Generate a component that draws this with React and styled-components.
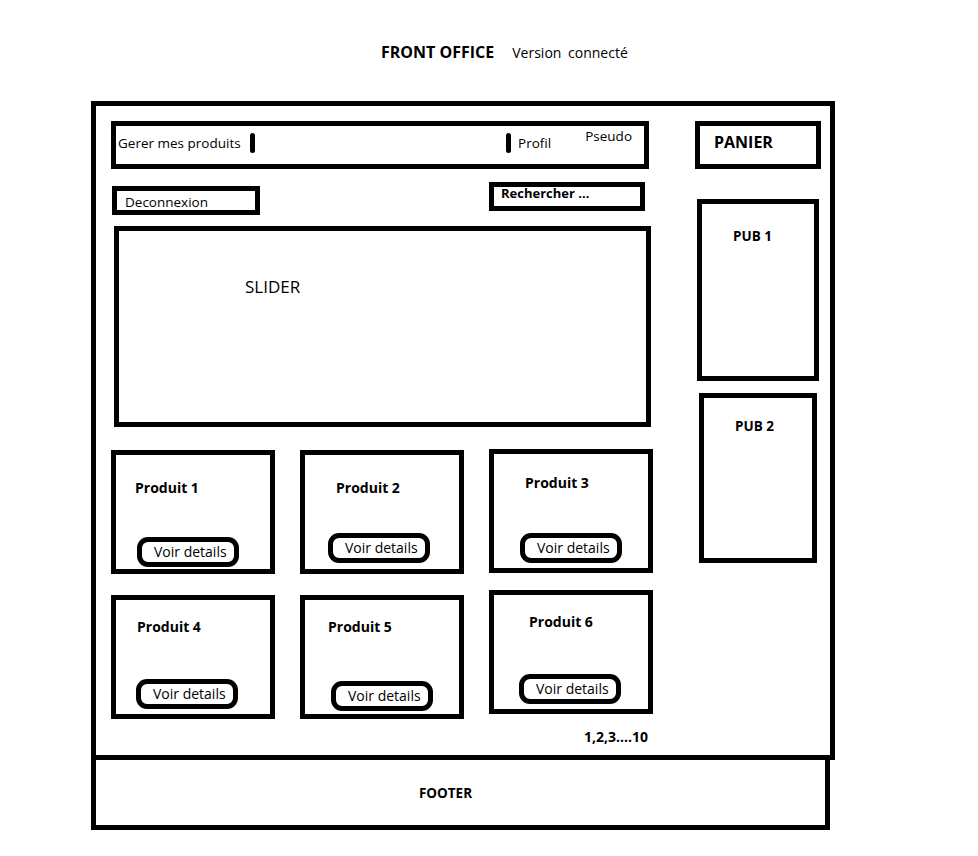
import React from "react";
import styled, { createGlobalStyle } from "styled-components";

const GlobalStyle = createGlobalStyle`
  body {
    margin: 0;
    background: #fff;
    font-family: "Open Sans", "Noto Sans", sans-serif;
    color: #000;
  }
`;

const Page = styled.div`
  width: 978px;
  height: 856px;
  padding-left: 91px;
  box-sizing: border-box;
`;

const TitleRow = styled.header`
  display: flex;
  align-items: baseline;
  gap: 18px;
  height: 101px;
  padding-left: 290px;
  padding-top: 41px;
  box-sizing: border-box;
`;

const Title = styled.h1`
  margin: 0;
  font-size: 16px;
  font-weight: 700;
`;

const Subtitle = styled.span`
  font-size: 14px;
  word-spacing: 3px;
`;

const Frame = styled.main`
  width: 744px;
  height: 659px;
  border: 5px solid #000;
  box-sizing: border-box;
  display: flex;
  padding: 15px 9px 0 15px;
`;

const LeftColumn = styled.div`
  width: 540px;
  display: flex;
  flex-direction: column;
`;

const RightColumn = styled.aside`
  margin-left: auto;
  width: 126px;
  display: flex;
  flex-direction: column;
  align-items: center;
`;

const Box = styled.div`
  border: 5px solid #000;
  box-sizing: border-box;
`;

const NavBar = styled(Box)`
  height: 48px;
  width: 538px;
  display: flex;
  align-items: center;
  padding: 0 12px 4px 2px;
  font-size: 13.5px;
`;

const Separator = styled.span`
  display: inline-block;
  width: 5px;
  height: 20px;
  border-radius: 3px;
  background: #000;
  margin: ${(p) => p.$margin || "0"};
`;

const RightNav = styled.div`
  margin-left: auto;
  display: flex;
  align-items: center;
  align-self: stretch;
`;

const Pseudo = styled.span`
  align-self: flex-start;
  margin-left: 34px;
  line-height: 20px;
`;

const ActionsRow = styled.div`
  display: flex;
  justify-content: space-between;
  align-items: flex-start;
  margin-top: 13px;
  padding-right: 6px;
`;

const Logout = styled(Box)`
  width: 148px;
  height: 29px;
  margin-top: 4px;
  margin-left: 1px;
  padding: 2px 0 0 8px;
  font-size: 13.5px;
  line-height: 19px;
`;

const Search = styled(Box)`
  width: 156px;
  height: 29px;
  padding-left: 7px;
  font-size: 13px;
  font-weight: 700;
  line-height: 12px;
`;

const Slider = styled(Box)`
  margin-top: 11px;
  margin-left: 3px;
  height: 201px;
  padding: 44px 0 0 126px;
  font-size: 17px;
`;

const ProductGrid = styled.div`
  display: grid;
  grid-template-columns: repeat(3, 164px);
  column-gap: 25px;
  row-gap: 21px;
  margin-top: 23px;
`;

const Card = styled(Box)`
  height: 124px;
  display: flex;
  flex-direction: column;
  align-items: flex-start;
  margin-top: ${(p) => p.$offset || 0}px;
`;

const CardTitle = styled.h3`
  margin: ${(p) => p.$top}px 0 0 ${(p) => p.$left}px;
  font-size: 14px;
  font-weight: 700;
  line-height: 18px;
`;

const DetailsButton = styled.button`
  width: 102px;
  height: 30px;
  margin: ${(p) => p.$top}px 0 0 ${(p) => p.$left}px;
  border: 5px solid #000;
  border-radius: 11px;
  background: #fff;
  font-family: inherit;
  font-size: 14px;
  color: #000;
  padding: 0 0 0 12px;
  text-align: left;
  line-height: 18px;
`;

const Pagination = styled.div`
  margin-top: 8px;
  text-align: right;
  padding-right: 3px;
  font-size: 14px;
  font-weight: 700;
`;

const Basket = styled(Box)`
  width: 126px;
  height: 48px;
  padding-left: 14px;
  font-size: 16px;
  font-weight: 700;
  line-height: 33px;
`;

const Ad = styled(Box)`
  width: ${(p) => p.$width}px;
  height: ${(p) => p.$height}px;
  margin-top: ${(p) => p.$gap}px;
  padding: ${(p) => p.$pad}px 0 0 31px;
  font-size: 13.5px;
  font-weight: 700;
`;

const Footer = styled.footer`
  width: 739px;
  height: 70px;
  border: 5px solid #000;
  border-top: 0;
  box-sizing: border-box;
  display: flex;
  align-items: center;
  justify-content: center;
  padding: 0 30px 0 0;
  font-size: 13.5px;
  font-weight: 700;
`;

// hand-drawn wireframe: each card has its own slightly different placement
// title: [left, centerY]  button: [left, top] (relative to the card's outer edge)
const products = [
  { name: "Produit 1", offset: 0, title: [24, 38], button: [26, 87] },
  { name: "Produit 2", offset: 0, title: [36, 38], button: [28, 83] },
  { name: "Produit 3", offset: -1, title: [36, 34], button: [31, 84] },
  { name: "Produit 4", offset: 0, title: [26, 32], button: [25, 84] },
  { name: "Produit 5", offset: 0, title: [28, 32], button: [31, 86] },
  { name: "Produit 6", offset: -5, title: [40, 32], button: [30, 84] },
];

export default function App() {
  return (
    <>
      <GlobalStyle />
      <Page>
        <TitleRow>
          <Title>FRONT OFFICE</Title>
          <Subtitle>Version connecté</Subtitle>
        </TitleRow>

        <Frame>
          <LeftColumn>
            <NavBar>
              <span>Gerer mes produits</span>
              <Separator $margin="0 0 0 9px" />
              <RightNav>
                <Separator $margin="0 7px 0 0" />
                <span>Profil</span>
                <Pseudo>Pseudo</Pseudo>
              </RightNav>
            </NavBar>

            <ActionsRow>
              <Logout>Deconnexion</Logout>
              <Search>Rechercher ...</Search>
            </ActionsRow>

            <Slider>SLIDER</Slider>

            <ProductGrid>
              {products.map((p) => (
                <Card key={p.name} $offset={p.offset}>
                  <CardTitle $left={p.title[0] - 5} $top={p.title[1] - 14}>
                    {p.name}
                  </CardTitle>
                  <DetailsButton
                    $left={p.button[0] - 5}
                    $top={p.button[1] - p.title[1] - 9}
                  >
                    Voir details
                  </DetailsButton>
                </Card>
              ))}
            </ProductGrid>

            <Pagination>1,2,3....10</Pagination>
          </LeftColumn>

          <RightColumn>
            <Basket>PANIER</Basket>
            <Ad $width={122} $height={182} $gap={30} $pad={23}>
              PUB 1
            </Ad>
            <Ad $width={118} $height={170} $gap={12} $pad={19}>
              PUB 2
            </Ad>
          </RightColumn>
        </Frame>

        <Footer>FOOTER</Footer>
      </Page>
    </>
  );
}
